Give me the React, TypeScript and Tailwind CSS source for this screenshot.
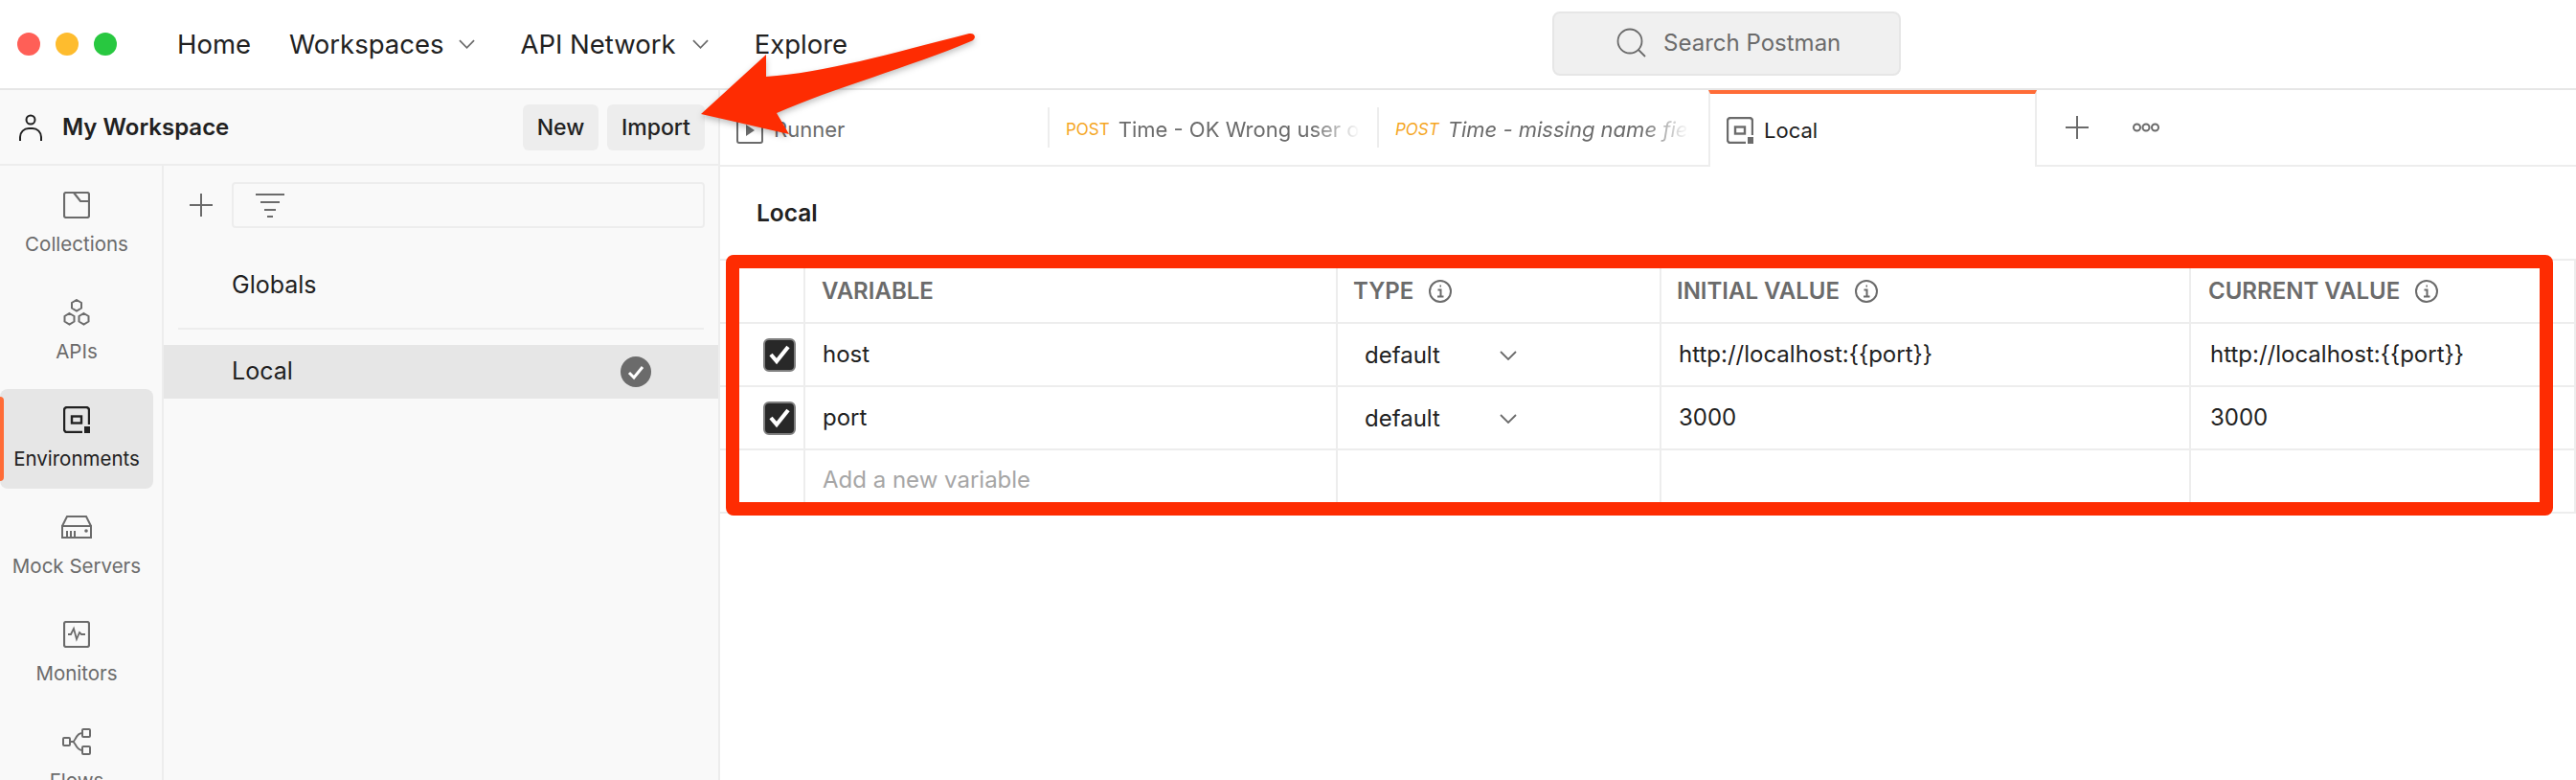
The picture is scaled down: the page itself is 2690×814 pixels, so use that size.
import React from 'react';

const gray = '#6b6b6b';

function Chevron({ className }: { className: string }) {
  return (
    <svg className={className} viewBox="0 0 18 10" fill="none" stroke="#6b6b6b" strokeWidth="1.8">
      <path d="M1 1l8 8 8-8" />
    </svg>
  );
}

function Info() {
  return (
    <svg className="w-[26px] h-[26px] shrink-0" viewBox="0 0 26 26" fill="none" stroke="#6b6b6b" strokeWidth="2">
      <circle cx="13" cy="13" r="11" />
      <path d="M10.5 11.5h3v6.5M10 18.5h6.5M12.5 7.5h1.5" />
    </svg>
  );
}

function EnvIcon({ color, w = 2.4 }: { color: string; w?: number }) {
  return (
    <svg className="w-[28px] h-[28px]" viewBox="0 0 28 28" fill="none" stroke={color} strokeWidth={w}>
      <path d="M20 27H4a3 3 0 0 1-3-3V4a3 3 0 0 1 3-3h20a3 3 0 0 1 3 3v15" />
      <rect x="9" y="10.5" width="10" height="7" />
      <rect x="22" y="21" width="6" height="7" fill={color} stroke="none" />
    </svg>
  );
}

function CollectionsIcon() {
  return (
    <svg className="w-[28px] h-[28px]" viewBox="0 0 28 28" fill="none" stroke={gray} strokeWidth="2.2">
      <path d="M3 1h8l7 9h9v15a2 2 0 0 1-2 2H3a2 2 0 0 1-2-2V3a2 2 0 0 1 2-2zM11 1h14a2 2 0 0 1 2 2v7" />
    </svg>
  );
}

function ApisIcon() {
  return (
    <svg className="w-[28px] h-[28px]" viewBox="0 0 28 28" fill="none" stroke={gray} strokeWidth="2">
      <path d="M14 1l5 3v5.500l-5 3-5-3V4zM6.500 15l5 3v5.500l-5 3-5-3V18zM21.500 15l5 3v5.500l-5 3-5-3V18z" />
    </svg>
  );
}

function MockIcon() {
  return (
    <svg className="w-[32px] h-[28px]" viewBox="0 0 32 28" fill="none" stroke={gray} strokeWidth="2">
      <path d="M1 13l5-10h20l5 10M1 13h30v12H1zM6 18v7M10 18v7M14 18v7" />
      <circle cx="26" cy="18" r="1.800" fill={gray} stroke="none" />
    </svg>
  );
}

function MonitorIcon() {
  return (
    <svg className="w-[28px] h-[28px]" viewBox="0 0 28 28" fill="none" stroke={gray} strokeWidth="2.2">
      <rect x="1" y="1" width="26" height="26" rx="2" />
      <path d="M5 14h3l3-6 3 11 3-7 2 2h4" strokeWidth="1.800" />
    </svg>
  );
}

function FlowsIcon() {
  return (
    <svg className="w-[30px] h-[28px]" viewBox="0 0 30 28" fill="none" stroke={gray} strokeWidth="2">
      <rect x="1" y="10" width="7" height="8" rx="1" />
      <rect x="21" y="1" width="8" height="8" rx="1" />
      <rect x="21" y="19" width="8" height="8" rx="1" />
      <path d="M8 14h3c3 0 3-9 10-9M11 14c3 0 3 9 10 9" />
    </svg>
  );
}

function RailItem({ label, icon, active }: { label: string; icon: React.ReactNode; active?: boolean }) {
  return (
    <div className={active ? 'relative h-[104px] shrink-0 mr-[9px] rounded-lg bg-[#e6e6e6] flex flex-col items-center pt-[18px] text-[#212121]' : 'h-[104px] shrink-0 mr-[9px] flex flex-col items-center pt-[18px] text-[#6b6b6b]'}>
      {active && <div className="absolute left-0 top-2 bottom-2 w-1 rounded-r bg-[#ff6c37]" />}
      <div className="h-[28px] flex items-center justify-center">{icon}</div>
      <span className="mt-[14px] text-[20.5px] leading-[26px] whitespace-nowrap">{label}</span>
    </div>
  );
}

function Tab({ title, italic, runner }: { title: string; italic?: boolean; runner?: boolean }) {
  return (
    <div className={italic ? 'w-[344px] h-[42px] flex items-center pl-[17px] pr-5 pt-[5px] overflow-hidden' : 'w-[344px] h-[42px] border-r-2 border-[#ededed] flex items-center pl-[17px] pr-5 pt-[5px] overflow-hidden'}>
      {runner ? (
        <svg className="w-[28px] h-[28px] shrink-0 mr-[11px]" viewBox="0 0 28 28" fill="none" stroke={gray} strokeWidth="2">
          <rect x="1" y="1" width="26" height="26" rx="2" />
          <path d="M10 8l9 6-9 6z" fill={gray} stroke="none" />
        </svg>
      ) : (
        <span className={italic ? 'text-[17px] italic text-[#f5a623] mr-[9px]' : 'text-[17px] text-[#f5a623] mr-[9px]'}>POST</span>
      )}
      <span
        className={italic ? 'text-[22px] italic text-[#6b6b6b] whitespace-nowrap overflow-hidden w-[252px] shrink-0 [mask-image:linear-gradient(to_right,black_80%,transparent)]' : runner ? 'text-[22px] text-[#6b6b6b] whitespace-nowrap' : 'text-[22px] text-[#6b6b6b] whitespace-nowrap overflow-hidden w-[252px] shrink-0 [mask-image:linear-gradient(to_right,black_80%,transparent)]'}
      >
        {title}
      </span>
    </div>
  );
}

const cell = 'border-r-2 border-b-2 border-[#ededed] flex items-center';
const rows = [
  { key: 'host', value: 'http://localhost:{{port}}' },
  { key: 'port', value: '3000' },
];

function Check() {
  return (
    <div className="w-[34px] h-[35px] rounded-md bg-[#282828] border-2 border-[#808080] flex items-center justify-center">
      <svg className="w-[26px] h-[22px]" viewBox="0 0 26 22" fill="none" stroke="white" strokeWidth="4.200">
        <path d="M4 11l6 7L22 3" />
      </svg>
    </div>
  );
}

export default function App() {
  return (
    <div className="relative w-[2690px] h-[814px] overflow-hidden bg-white font-['Inter',sans-serif] text-[#212121]">
      {/* title bar */}
      <header className="relative h-[94px] border-b-2 border-[#e6e6e6] flex items-center">
        <div className="flex items-center gap-4 pl-[18px] w-[185px]">
          <div className="w-6 h-6 rounded-full bg-[#ff5f57]" />
          <div className="w-6 h-6 rounded-full bg-[#febc2e]" />
          <div className="w-6 h-6 rounded-full bg-[#28c840]" />
        </div>
        <nav className="flex items-center text-[27.5px] leading-8">
          <span>Home</span>
          <span className="ml-[40px]">Workspaces</span>
          <Chevron className="w-[17px] h-[10px] ml-[16px]" />
          <span className="ml-[47px]">API Network</span>
          <Chevron className="w-[17px] h-[10px] ml-[17px]" />
          <span className="ml-[48px]">Explore</span>
        </nav>
        <div className="ml-[736px] -mt-[2px] w-[364px] h-[67px] rounded-lg bg-[#f0f0f0] border-2 border-[#e6e6e6] flex items-center pl-[65px] text-[24px] text-[#6b6b6b]">
          <svg className="w-[32px] h-[32px] mr-[17px]" viewBox="0 0 32 32" fill="none" stroke="#6b6b6b" strokeWidth="1.800">
            <circle cx="14" cy="14" r="12.500" />
            <path d="M23 23l7 7" />
          </svg>
          Search Postman
        </div>
      </header>

      <div className="flex h-[720px]">
        {/* left pane */}
        <aside className="w-[752px] shrink-0 bg-[#f9f9f9] border-r-2 border-[#ededed] flex flex-col">
          <div className="h-[79px] shrink-0 border-b-2 border-[#ededed] flex items-center pl-5 pr-[14px]">
            <svg className="w-[24px] h-[28px] mr-[21px]" viewBox="0 0 24 28" fill="none" stroke="#212121" strokeWidth="2">
              <circle cx="12" cy="6" r="4.500" />
              <path d="M1 28v-4a9 9 0 0 1 9-9h4a9 9 0 0 1 9 9v4" />
            </svg>
            <span className="text-[24px] font-semibold">My Workspace</span>
            <div className="ml-auto flex gap-[9px] text-[23px] font-medium">
              <div className="w-[79px] h-[48px] rounded-md bg-[#ededed] flex items-center justify-center pt-[2px]">New</div>
              <div className="w-[102px] h-[48px] rounded-md bg-[#ededed] flex items-center justify-center pt-[2px]">Import</div>
            </div>
          </div>
          <div className="flex flex-1 min-h-0">
            <div className="w-[171px] shrink-0 border-r-2 border-[#ededed] pt-[9px] flex flex-col gap-2">
              <RailItem label="Collections" icon={<CollectionsIcon />} />
              <RailItem label="APIs" icon={<ApisIcon />} />
              <RailItem label="Environments" icon={<EnvIcon color="#212121" />} active />
              <RailItem label="Mock Servers" icon={<MockIcon />} />
              <RailItem label="Monitors" icon={<MonitorIcon />} />
              <RailItem label="Flows" icon={<FlowsIcon />} />
            </div>
            <div className="flex-1 min-w-0">
              <div className="flex items-center pt-[17px] pl-[27px] pr-[14px]">
                <svg className="w-[24px] h-[24px]" viewBox="0 0 24 24" stroke="#6b6b6b" strokeWidth="2">
                  <path d="M12 0v24M0 12h24" />
                </svg>
                <div className="ml-5 flex-1 h-[48px] rounded bg-[#f9f9f9] border-2 border-[#ededed] flex items-center pl-[23px]">
                  <svg className="w-[30px] h-[26px]" viewBox="0 0 30 26" stroke="#6b6b6b" strokeWidth="2">
                    <path d="M0 2h30M5 10h20M9 18h12M12 25h6" />
                  </svg>
                </div>
              </div>
              <div className="h-[106px] mx-[15px] pl-[56px] pt-[16px] border-b-2 border-[#ededed] flex items-center text-[25px]">Globals</div>
              <div className="mt-[16px] h-[56px] bg-[#e6e6e6] flex items-center pl-[71px] text-[25px]">
                Local
                <div className="ml-auto mr-[70px] w-8 h-8 rounded-full bg-[#6b6b6b] flex items-center justify-center">
                  <svg className="w-5 h-5" viewBox="0 0 20 20" fill="none" stroke="white" strokeWidth="3">
                    <path d="M3 11l5 5 9-11" />
                  </svg>
                </div>
              </div>
            </div>
          </div>
        </aside>

        {/* main */}
        <main className="flex-1 min-w-0">
          <div className="h-[80px] border-b-2 border-[#ededed] flex items-center relative">
            <Tab title="Runner" runner />
            <Tab title="Time - OK Wrong user or" />
            <Tab title="Time - missing name field" italic />
            <div className="-mb-[2px] self-stretch w-[343px] shrink-0 bg-white border-x-2 border-[#ededed] border-t-[4px] border-t-[#ff6c37] flex items-center pl-[17px] text-[22px]">
              <EnvIcon color="#6b6b6b" />
              <span className="ml-[11px]">Local</span>
            </div>
            <svg className="ml-[30px] w-[24px] h-[24px]" viewBox="0 0 24 24" stroke="#6b6b6b" strokeWidth="2">
              <path d="M12 0v24M0 12h24" />
            </svg>
            <svg className="ml-[46px] w-[28px] h-[12px]" viewBox="0 0 28 12" fill="none" stroke="#6b6b6b" strokeWidth="2">
              <circle cx="4.500" cy="6" r="3.500" />
              <circle cx="14" cy="6" r="3.500" />
              <circle cx="23.500" cy="6" r="3.500" />
            </svg>
          </div>
          <div className="h-[96px] pl-[38px] pt-[33px] text-[24.5px] leading-[30px] font-semibold">Local</div>
          <div className="grid grid-cols-[89px_556px_338px_553px_1fr] border-t-2 border-[#ededed]">
            <div className={`${cell} h-[66px]`} />
            <div className={`${cell} pl-[17px] text-[24px] font-semibold text-[#6b6b6b]`}>VARIABLE</div>
            <div className={`${cell} pl-[16px] gap-[15px] text-[24px] font-semibold text-[#6b6b6b]`}>TYPE <Info /></div>
            <div className={`${cell} pl-[16px] gap-[15px] text-[24px] font-semibold text-[#6b6b6b]`}>INITIAL VALUE <Info /></div>
            <div className={`${cell} pl-[18px] gap-[15px] text-[24px] font-semibold text-[#6b6b6b] border-r-0`}>CURRENT VALUE <Info /></div>
            {rows.map(r => (
              <React.Fragment key={r.key}>
                <div className={`${cell} h-[66px] justify-end pr-[8px]`}><Check /></div>
                <div className={`${cell} pl-[18px] text-[24px]`}>{r.key}</div>
                <div className={`${cell} pl-[28px] pt-[2px] text-[24px]`}>
                  default
                  <Chevron className="ml-[62px] w-[18px] h-[10px]" />
                </div>
                <div className={`${cell} pl-[18px] text-[24px]`}>{r.value}</div>
                <div className={`${cell} pl-[20px] text-[24px] border-r-0`}>{r.value}</div>
              </React.Fragment>
            ))}
            <div className={`${cell} h-[66px]`} />
            <div className={`${cell} pl-[18px] pb-[3px] text-[24px] text-[#a6a6a6]`}>Add a new variable</div>
            <div className={cell} />
            <div className={cell} />
            <div className={`${cell} border-r-0`} />
          </div>
        </main>
      </div>

      {/* annotations drawn over the screenshot */}
      <div className="absolute left-[758px] top-[266px] w-[1908px] h-[272px] border-[14px] border-[#fe2c02] rounded-lg" />
      <svg className="absolute left-[720px] top-[25px] w-[310px] h-[130px] drop-shadow-[0_3px_3px_rgba(0,0,0,0.25)]" viewBox="720 25 310 130">
        <path
          d="M732 119L800 57L800 80C860 76 930 56 1012 35C1019 34 1020 41 1014 43C950 70 870 92 811 118L824 140Z"
          fill="#fe2c02"
        />
      </svg>
    </div>
  );
}
